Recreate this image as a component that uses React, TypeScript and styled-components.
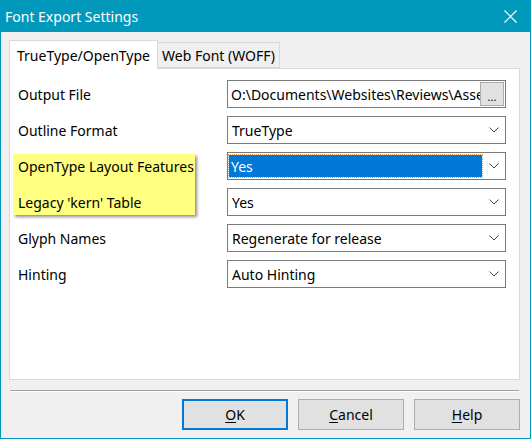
import React from "react";
import styled, { createGlobalStyle } from "styled-components";

const GlobalStyle = createGlobalStyle`
  html, body {
    margin: 0;
    padding: 0;
    background: #ffffff;
  }
  body {
    font-family: "Noto Sans", "Open Sans", sans-serif;
    font-size: 14px;
    color: #000;
  }
`;

const Window = styled.div`
  width: 531px;
  height: 439px;
  box-sizing: border-box;
  border: 1px solid #0099bc;
  border-top: none;
  background: #f0f0f0;
  display: flex;
  flex-direction: column;
`;

const TitleBar = styled.div`
  height: 32px;
  margin: 0 -1px;
  background: #0099bc;
  color: #fff;
  display: flex;
  align-items: center;
  justify-content: space-between;
  padding: 0 14px 0 5px;
  font-size: 14px;
`;

const Client = styled.div`
  flex: 1;
  display: flex;
  flex-direction: column;
  padding: 8px 10px 0 8px;
`;

const TabStrip = styled.div`
  display: flex;
  align-items: flex-end;
  height: 28px;
  position: relative;
  z-index: 2;
`;

const Tab = styled.div<{ $active?: boolean }>`
  box-sizing: border-box;
  height: ${(p) => (p.$active ? "29px" : "26px")};
  padding: ${(p) => (p.$active ? "0 7px" : "0 4px")};
  display: flex;
  align-items: center;
  background: ${(p) => (p.$active ? "#fff" : "#f0f0f0")};
  border: 1px solid #d9d9d9;
  border-bottom: ${(p) => (p.$active ? "none" : "1px solid #d9d9d9")};
  border-left: ${(p) => (p.$active ? "1px solid #d9d9d9" : "none")};
  margin-bottom: ${(p) => (p.$active ? "-1px" : "0")};
`;

const Panel = styled.div`
  position: relative;
  height: 312px;
  box-sizing: border-box;
  background: #fff;
  border: 1px solid #d9d9d9;
  padding: 11px 12px 0 8px;
  display: flex;
  flex-direction: column;
  gap: 8px;
`;

const Highlight = styled.div`
  position: absolute;
  left: 3px;
  top: 85px;
  width: 182px;
  height: 61px;
  background: #ffff80;
  box-shadow: 2px 2px 3px rgba(0, 0, 0, 0.45);
  z-index: 0;
`;

const Row = styled.div`
  position: relative;
  z-index: 1;
  display: grid;
  grid-template-columns: 209px 279px;
  align-items: center;
  height: 28px;
`;

const Label = styled.span`
  white-space: nowrap;
`;

const Field = styled.div`
  box-sizing: border-box;
  height: 28px;
  border: 1px solid #7a7a7a;
  background: #fff;
  display: flex;
  align-items: center;
  padding: 0 6px 0 4px;
  overflow: hidden;
  white-space: nowrap;
`;

const PathText = styled.span`
  flex: 1;
  min-width: 0;
  overflow: hidden;
  white-space: nowrap;
  margin-left: -1px;
`;

const BrowseButton = styled.div`
  flex: none;
  box-sizing: border-box;
  width: 24px;
  height: 24px;
  margin-right: -5px;
  background: #e1e1e1;
  border: 1px solid #adadad;
  display: flex;
  align-items: flex-end;
  justify-content: center;
  font-size: 11px;
  line-height: 16px;
`;

const Value = styled.span<{ $selected?: boolean }>`
  flex: 1;
  align-self: stretch;
  display: flex;
  align-items: center;
  margin: ${(p) => (p.$selected ? "2px 7px 2px -3px" : "0")};
  padding-left: ${(p) => (p.$selected ? "2px" : "0")};
  background: ${(p) => (p.$selected ? "#0078d7" : "transparent")};
  color: ${(p) => (p.$selected ? "#fff" : "#000")};
  outline: ${(p) => (p.$selected ? "1px dotted #f0a050" : "none")};
`;

const Chevron = () => (
  <svg width="10" height="6" viewBox="0 0 10 6">
    <path d="M0.5 0.5 L5 5 L9.5 0.5" fill="none" stroke="#444" strokeWidth="1" />
  </svg>
);

const Separator = styled.div`
  height: 0;
  border-top: 1px solid #a0a0a0;
  border-bottom: 1px solid #fff;
  margin: 10px 1px 0 1px;
`;

const ButtonRow = styled.div`
  display: flex;
  justify-content: flex-end;
  gap: 10px;
  margin-top: 7px;
`;

const Button = styled.div<{ $default?: boolean }>`
  box-sizing: border-box;
  width: 106px;
  height: 31px;
  background: #e1e1e1;
  border: ${(p) => (p.$default ? "2px solid #0078d7" : "1px solid #adadad")};
  display: flex;
  align-items: center;
  justify-content: center;
  u {
    text-decoration-thickness: 1px;
    text-underline-offset: 2px;
  }
`;

const rows = [
  { label: "Outline Format", value: "TrueType" },
  { label: "OpenType Layout Features", value: "Yes", selected: true },
  { label: "Legacy 'kern' Table", value: "Yes" },
  { label: "Glyph Names", value: "Regenerate for release" },
  { label: "Hinting", value: "Auto Hinting" },
];

export default function App() {
  return (
    <>
      <GlobalStyle />
      <Window>
        <TitleBar>
          <span>Font Export Settings</span>
          <svg width="13" height="13" viewBox="0 0 13 13">
            <path d="M0.5 0.5 L12.5 12.5 M12.5 0.5 L0.5 12.5" stroke="#fff" strokeWidth="1.2" />
          </svg>
        </TitleBar>
        <Client>
          <TabStrip>
            <Tab $active>TrueType/OpenType</Tab>
            <Tab>Web Font (WOFF)</Tab>
          </TabStrip>
          <Panel>
            <Highlight />
            <Row>
              <Label>Output File</Label>
              <Field>
                <PathText>O:\Documents\Websites\Reviews\Assets</PathText>
                <BrowseButton>...</BrowseButton>
              </Field>
            </Row>
            {rows.map((r) => (
              <Row key={r.label}>
                <Label>{r.label}</Label>
                <Field>
                  <Value $selected={r.selected}>{r.value}</Value>
                  <Chevron />
                </Field>
              </Row>
            ))}
          </Panel>
          <Separator />
          <ButtonRow>
            <Button $default>
              <span><u>O</u>K</span>
            </Button>
            <Button>
              <span><u>C</u>ancel</span>
            </Button>
            <Button>
              <span><u>H</u>elp</span>
            </Button>
          </ButtonRow>
        </Client>
      </Window>
    </>
  );
}
